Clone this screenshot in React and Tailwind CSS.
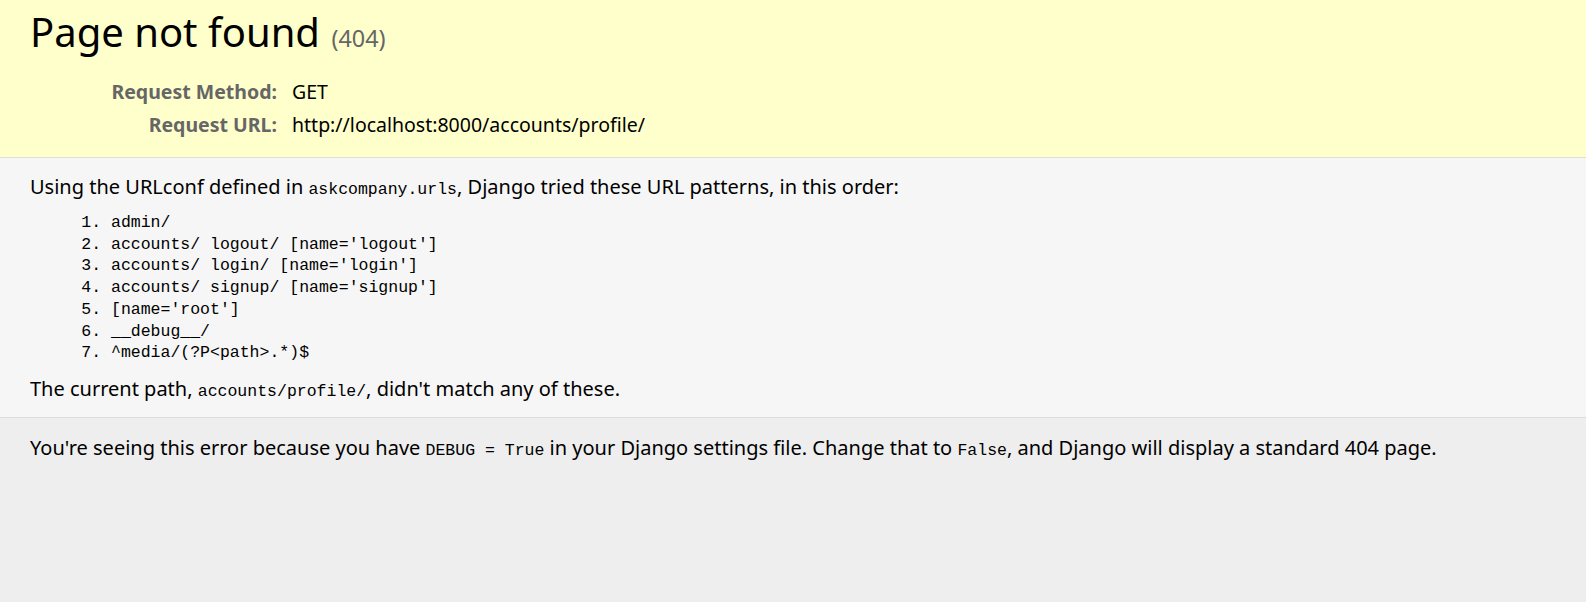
const sans = "font-['Noto_Sans',_'Noto_Sans_CJK_KR',_sans-serif]";
const mono = "font-['Liberation_Mono',_'DejaVu_Sans_Mono',_monospace]";

const patterns = [
  "admin/",
  "accounts/ logout/ [name='logout']",
  "accounts/ login/ [name='login']",
  "accounts/ signup/ [name='signup']",
  "[name='root']",
  "__debug__/",
  "^media/(?P<path>.*)$",
];

// inline code: leading-none so it doesn't stretch the line box
function Code({ children }) {
  return <code className={`${mono} text-[16.5px] leading-none`}>{children}</code>;
}

export default function App() {
  return (
    <div className={`${sans} min-h-screen bg-[#eee] text-black text-[20px]`}>
      {/* summary */}
      <div className="bg-[#ffc] border-b border-[#ddd] px-[30px] pt-[9px] pb-[16px]">
        <h1 className="text-[40px] leading-[46px] font-normal mb-[20px]">
          Page not found <span className="ml-[1px] text-[23.4px] leading-none text-[#666]">(404)</span>
        </h1>
        <div className="grid grid-cols-[247px_1fr] gap-x-[15px] text-[19.5px] leading-[33px]">
          <div className="text-right font-bold text-[#666]">Request Method:</div>
          <div>GET</div>
          <div className="text-right font-bold text-[#666]">Request URL:</div>
          <div>http://localhost:8000/accounts/profile/</div>
        </div>
      </div>

      {/* info */}
      <div className="bg-[#f6f6f6] border-b border-[#ddd] px-[30px] pt-[15px] pb-[15px] leading-[27px]">
        <p>
          Using the URLconf defined in <Code>askcompany.urls</Code>, Django tried these URL patterns, in this order:
        </p>
        <ol className={`${mono} list-decimal ml-[81px] mt-[12px] mb-[11px] text-[16.5px] leading-[21.7px]`}>
          {patterns.map((p) => (
            <li key={p} className="whitespace-pre">{p}</li>
          ))}
        </ol>
        <p>
          The current path, <Code>accounts/profile/</Code>, didn't match any of these.
        </p>
      </div>

      {/* explanation */}
      <div className="px-[30px] pt-[16px] pb-[15px] leading-[27px]">
        <p>
          You're seeing this error because you have <Code>DEBUG = True</Code> in your Django settings file. Change that to <Code>False</Code>, and Django will display a standard 404 page.
        </p>
      </div>
    </div>
  );
}
